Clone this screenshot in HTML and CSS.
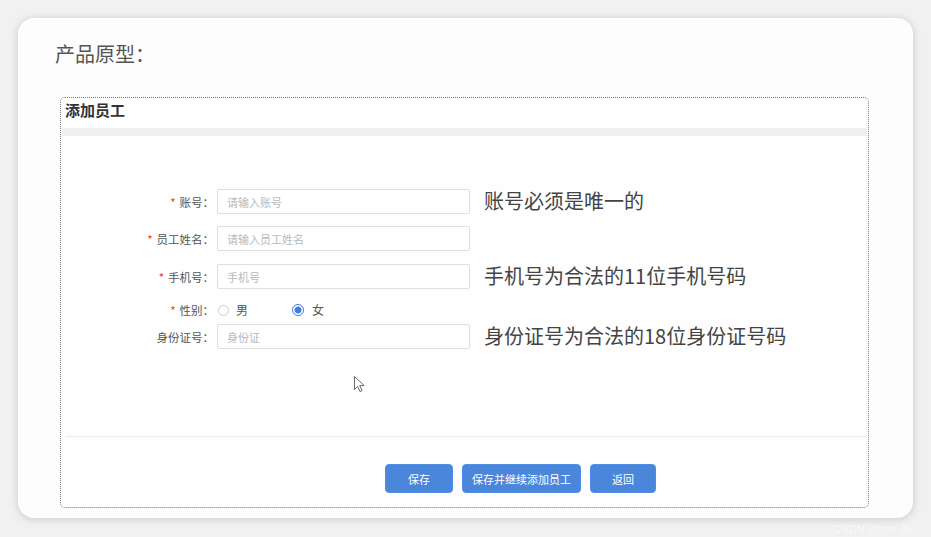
FILE: index.html
```html
<!DOCTYPE html>
<html lang="zh-CN">
<head>
<meta charset="utf-8">
<title>产品原型</title>
<link rel="stylesheet" href="styles.css">
</head>
<body>
<div class="page">
  <div class="card">
    <h1 class="title">产品原型：</h1>
    <div class="proto">
      <div class="proto-head">添加员工</div>
      <div class="band"></div>
      <div class="form">
        <div class="row r1">
          <label class="lbl"><span class="req">*</span>账号：</label>
          <input class="field" type="text" placeholder="请输入账号">
          <span class="note">账号必须是唯一的</span>
        </div>
        <div class="row r2">
          <label class="lbl"><span class="req">*</span>员工姓名：</label>
          <input class="field" type="text" placeholder="请输入员工姓名">
        </div>
        <div class="row r3">
          <label class="lbl"><span class="req">*</span>手机号：</label>
          <input class="field" type="text" placeholder="手机号">
          <span class="note">手机号为合法的11位手机号码</span>
        </div>
        <div class="row r4">
          <label class="lbl"><span class="req">*</span>性别：</label>
          <div class="radios">
            <span class="radio"><span class="dot"></span><span class="rtext">男</span></span>
            <span class="radio checked"><span class="dot"></span><span class="rtext">女</span></span>
          </div>
        </div>
        <div class="row r5">
          <label class="lbl">身份证号：</label>
          <input class="field" type="text" placeholder="身份证">
          <span class="note">身份证号为合法的18位身份证号码</span>
        </div>
      </div>
      <div class="divider"></div>
      <div class="actions">
        <button class="btn btn-save">保存</button>
        <button class="btn btn-more">保存并继续添加员工</button>
        <button class="btn btn-back">返回</button>
      </div>
    </div>
  </div>
  <svg class="cursor" width="13" height="18" viewBox="0 0 13 18" aria-hidden="true">
    <path d="M1.5 1.5 L1.5 14.5 L4.6 11.4 L7 16.6 L9.2 15.6 L6.8 10.6 L11.2 10.6 Z" fill="#ffffff" stroke="#6a6a6a" stroke-width="1" stroke-linejoin="round"/>
  </svg>
  <div class="watermark">CSDN @yun_lly</div>
</div>
</body>
</html>
```

FILE: styles.css
```css
* { box-sizing: border-box; }

html, body {
  margin: 0;
  padding: 0;
}

body {
  width: 931px;
  height: 537px;
  overflow: hidden;
  background: #f1f1f1;
  font-family: "Noto Sans CJK SC", "Noto Sans", sans-serif;
  color: #555;
}

.page {
  position: relative;
  height: 537px;
  padding: 18px 18px 0 18px;
}

.card {
  height: 500px;
  background: #fdfdfd;
  border-radius: 16px;
  box-shadow: 0 1px 9px rgba(0, 0, 0, 0.17);
  padding-top: 22px;
}

.title {
  margin: 0 0 0 37px;
  font-size: 20px;
  line-height: 28px;
  font-weight: normal;
  color: #555;
}

.proto {
  margin: 29px 44px 0 42px;
  border: 1px dotted #7a7a7a;
  border-radius: 5px;
  background: #fefefe;
}

.proto-head {
  padding: 2px 4px 8px 4px;
  font-size: 15px;
  line-height: 20px;
  font-weight: bold;
  color: #333;
}

.band {
  height: 8px;
  margin: 0 1px;
  background: #f0f0f0;
}

.form {
  padding-top: 53px;
  padding-bottom: 87px;
}

.row {
  display: flex;
  align-items: center;
  height: 25px;
}

.r1 { margin-bottom: 12px; }
.r2 { margin-bottom: 13px; }
.r3 { margin-bottom: 9px; }
.r4 { height: 24px; margin-bottom: 2px; }

.lbl {
  width: 153px;
  text-align: right;
  font-size: 11.5px;
  color: #555;
  white-space: nowrap;
}

.req {
  color: #e23b3b;
  margin-right: 4px;
}

.field {
  width: 253px;
  height: 25px;
  margin: 0 0 0 3px;
  padding: 0 9px;
  border: 1px solid #dedede;
  border-radius: 2px;
  background: #fff;
  font-family: "Noto Sans CJK SC", "Noto Sans", sans-serif;
  font-size: 11px;
  color: #555;
  outline: none;
}

.field::placeholder {
  color: #b9b9b9;
}

.note {
  margin-left: 14px;
  margin-bottom: 3px;
  font-size: 20px;
  line-height: 25px;
  color: #444;
  white-space: nowrap;
}

.radios {
  display: flex;
  align-items: center;
  margin-left: 4px;
}

.radio {
  display: flex;
  align-items: center;
  margin-right: 44px;
}

.dot {
  width: 11px;
  height: 11px;
  border: 1px solid #cfcfcf;
  border-radius: 50%;
  background: #fff;
  margin-right: 7px;
}

.radio.checked .dot {
  width: 12px;
  height: 12px;
  border: 1px solid #3d7fe0;
  background: radial-gradient(circle, #3d7fe0 0 3.2px, #ffffff 3.8px);
  margin-right: 8px;
}

.rtext {
  font-size: 12px;
  line-height: 16px;
  color: #555;
}

.divider {
  height: 1px;
  margin: 0 1px 0 5px;
  background: #ececec;
}

.actions {
  display: flex;
  gap: 9px;
  padding: 27px 0 14px 324px;
}

.btn {
  height: 29px;
  padding: 0;
  border: 1px solid #4f8ee4;
  border-radius: 4px;
  background: #4a86da;
  color: #fff;
  font-family: "Noto Sans CJK SC", "Noto Sans", sans-serif;
  font-size: 11px;
  cursor: pointer;
}

.btn-save { width: 68px; }
.btn-more { width: 119px; }
.btn-back { width: 66px; }

.cursor {
  position: absolute;
  left: 353px;
  top: 375px;
}

.watermark {
  position: absolute;
  right: 18px;
  bottom: 2px;
  font-family: "Liberation Sans", Arial, sans-serif;
  font-size: 11px;
  color: rgba(255, 255, 255, 0.9);
  text-shadow: 0 0 1px rgba(0, 0, 0, 0.06);
}
```
